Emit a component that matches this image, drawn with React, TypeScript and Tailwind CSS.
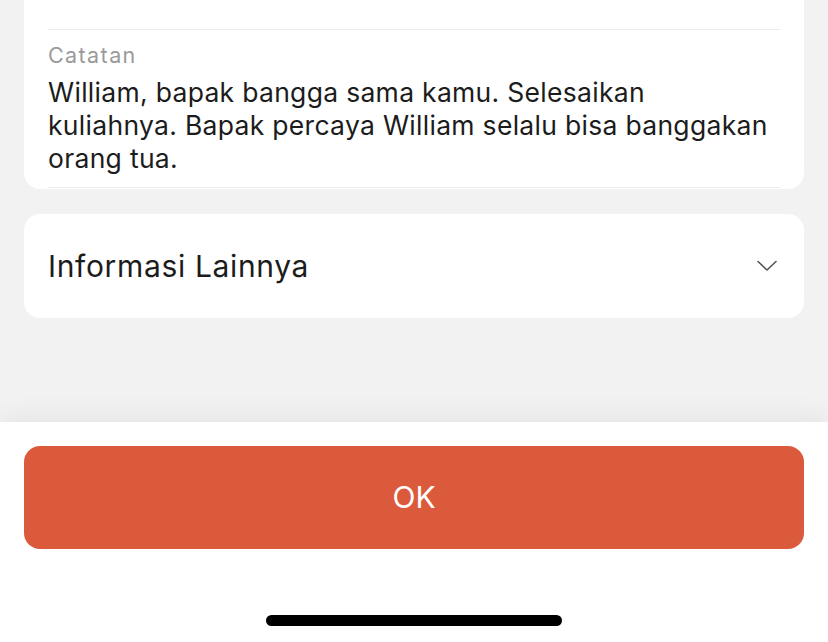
export default function App() {
  return (
    <div
      className="flex h-[642px] w-[828px] flex-col overflow-hidden bg-[#f2f2f2]"
      style={{ fontFamily: "Inter, 'Noto Sans', sans-serif" }}
    >
      <div className="flex-1 px-6">
        {/* Catatan card, top is scrolled off-screen */}
        <div className="rounded-b-2xl bg-white px-6 pt-[29px]">
          <div className="h-px bg-[#ebebeb]" />
          <div className="pt-[12px] text-[21.5px] leading-[26px] tracking-[1.4px] text-[#9a9a9a]">Catatan</div>
          <p className="mt-[8px] text-[26.5px] leading-[33px] tracking-[0.3px] text-[#1c1c1c]">
            William, bapak bangga sama kamu. Selesaikan kuliahnya. Bapak percaya William selalu bisa banggakan orang tua.
          </p>
          <div className="mt-[12px] h-px bg-[#ededed]" />
          <div className="h-px" />
        </div>

        <div className="mt-[25px] flex h-[104px] items-center justify-between rounded-2xl bg-white px-6">
          <span className="text-[30px] tracking-[0.65px] text-[#1c1c1c]">Informasi Lainnya</span>
          <svg width="20" height="12" viewBox="0 0 20 12" className="mr-[3px]">
            <path d="M1 1.5 L10 10 L19 1.5" fill="none" stroke="#555" strokeWidth="1.6" strokeLinecap="round" strokeLinejoin="round" />
          </svg>
        </div>
      </div>

      <div className="relative h-[220px] bg-white shadow-[0_-6px_24px_rgba(0,0,0,0.06)]">
        <div className="px-6 pt-6">
          <button className="flex h-[103px] w-full items-center justify-center rounded-2xl bg-[#dc5a3c] text-[30px] text-white">
            OK
          </button>
        </div>
        <div className="mt-[66px] flex justify-center">
          <div className="h-[11px] w-[296px] rounded-full bg-black" />
        </div>
      </div>
    </div>
  );
}
